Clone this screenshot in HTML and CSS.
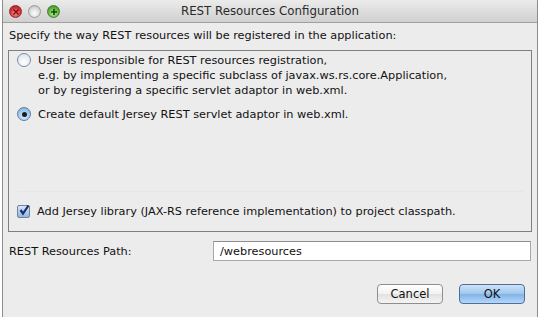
FILE: index.html
```html
<!DOCTYPE html>
<html lang="en">
<head>
    <meta charset="UTF-8">
    <title>REST Resources Configuration</title>
    <link rel="stylesheet" href="styles.css">
</head>
<body>
    <div class="window">
        <div class="title-bar">
            <div class="lights">
                <span class="light close"><svg width="8" height="8" viewBox="0 0 8 8"><path d="M1.5 1.5 L6.5 6.5 M6.5 1.5 L1.5 6.5" stroke="#7a0a0a" stroke-width="1.4"/></svg></span>
                <span class="light mini"></span>
                <span class="light zoom"><svg width="8" height="8" viewBox="0 0 8 8"><path d="M4 1 V7 M1 4 H7" stroke="#0b4a0b" stroke-width="1.6"/></svg></span>
            </div>
            <div class="title">REST Resources Configuration</div>
        </div>

        <div class="content">
            <div class="intro">Specify the way REST resources will be registered in the application:</div>

            <div class="group">
                <div class="option">
                    <span class="radio"></span>
                    <div class="option-text">
                        User is responsible for REST resources registration,<br>
                        e.g. by implementing a specific subclass of javax.ws.rs.core.Application,<br>
                        or by registering a specific servlet adaptor in web.xml.
                    </div>
                </div>
                <div class="option">
                    <span class="radio checked"></span>
                    <div class="option-text">Create default Jersey REST servlet adaptor in web.xml.</div>
                </div>
                <div class="spacer"></div>
                <div class="option check-row">
                    <span class="checkbox">
                        <svg width="12" height="12" viewBox="0 0 12 12"><path d="M2.5 6 L5 9.5 L10.5 1.5" fill="none" stroke="#1c2f6e" stroke-width="2.2"/></svg>
                    </span>
                    <div class="option-text">Add Jersey library (JAX-RS reference implementation) to project classpath.</div>
                </div>
            </div>

            <div class="path-row">
                <label class="path-label">REST Resources Path:</label>
                <div class="path-input">/webresources</div>
            </div>

            <div class="buttons">
                <button class="btn">Cancel</button>
                <button class="btn primary">OK</button>
            </div>
        </div>
    </div>
</body>
</html>
```

FILE: styles.css
```css
body {
    margin: 0;
    background-color: #ffffff;
    font-family: "DejaVu Sans", sans-serif;
    font-size: 11.3px;
    color: #111111;
}

.window {
    width: 536px;
    height: 317px;
    margin-left: 2px;
    border-left: 1px solid #8c8c8c;
    border-right: 1px solid #8c8c8c;
    background-color: #ececec;
    box-sizing: border-box;
    display: flex;
    flex-direction: column;
}

.title-bar {
    height: 22px;
    background: linear-gradient(#ebebeb, #d0d0d0);
    border-bottom: 1px solid #a0a0a0;
    display: flex;
    align-items: center;
    position: relative;
}

.lights {
    position: absolute;
    left: 6px;
    top: 5px;
    display: flex;
    gap: 6px;
}

.light {
    width: 13px;
    height: 13px;
    border-radius: 50%;
    display: flex;
    justify-content: center;
    align-items: center;
    box-sizing: border-box;
}

.light.close {
    background: radial-gradient(circle at 50% 65%, #f9a0a0, #d4353a 55%, #8e1d20);
    border: 1px solid #9a2a2e;
}

.light.mini {
    background: radial-gradient(circle at 50% 65%, #ffffff, #d8d8d8 60%, #a9a9a9);
    border: 1px solid #9c9c9c;
}

.light.zoom {
    background: radial-gradient(circle at 50% 65%, #c6f2a4, #62b43d 55%, #2f7a1f);
    border: 1px solid #3f7f2a;
}

.title {
    flex: 1;
    text-align: center;
    font-size: 11.8px;
    color: #2a2a2a;
}

.content {
    flex: 1;
    display: flex;
    flex-direction: column;
    padding: 5px 5px 0 5px;
}

.intro {
    padding-left: 1px;
    line-height: 16px;
}

.group {
    margin-top: 6px;
    height: 182px;
    border: 1px solid #7f7f7f;
    box-sizing: border-box;
    display: flex;
    flex-direction: column;
    padding: 2px 0 0 8px;
}

.option {
    display: flex;
    align-items: flex-start;
    gap: 7px;
    margin-bottom: 9px;
}

.option-text {
    line-height: 15px;
}

.radio {
    width: 14px;
    height: 14px;
    border-radius: 50%;
    border: 1px solid #7c8ea8;
    background: radial-gradient(circle at 50% 70%, #ffffff, #e4e8ee 70%, #c5ccd8);
    box-sizing: border-box;
    flex-shrink: 0;
    display: flex;
    justify-content: center;
    align-items: center;
}

.radio.checked {
    background: radial-gradient(circle at 50% 70%, #d9ecfb, #9ec6ea 60%, #6a9fd0);
    border-color: #5f7fa6;
}

.radio.checked::after {
    content: "";
    width: 5px;
    height: 5px;
    border-radius: 50%;
    background-color: #1b1b1b;
}

.spacer {
    flex: 1;
    border-bottom: 1px solid #e6e6e6;
    margin-right: 8px;
    margin-bottom: 12px;
}

.check-row {
    margin-bottom: 12px;
}

.checkbox {
    width: 13px;
    height: 13px;
    border: 1px solid #6f82a0;
    border-radius: 2px;
    background: linear-gradient(#d6e6f7, #8fb8e2);
    box-sizing: border-box;
    flex-shrink: 0;
    margin-top: 1px;
    position: relative;
}

.checkbox svg {
    position: absolute;
    left: 0;
    top: -2px;
}

.path-row {
    display: flex;
    align-items: center;
    margin-top: 9px;
}

.path-label {
    width: 204px;
    padding-left: 1px;
}

.path-input {
    flex: 1;
    height: 20px;
    line-height: 20px;
    border: 1px solid #a8a8a8;
    border-top-color: #8e8e8e;
    background-color: #ffffff;
    padding-left: 6px;
    margin-right: 1px;
    box-sizing: border-box;
}

.buttons {
    display: flex;
    justify-content: flex-end;
    gap: 16px;
    margin-top: 23px;
    padding-right: 7px;
}

.btn {
    width: 66px;
    height: 20px;
    font-family: "DejaVu Sans", sans-serif;
    font-size: 11.5px;
    color: #111111;
    border: 1px solid #8e8e8e;
    border-radius: 4px;
    background: linear-gradient(#ffffff, #f1f1f1 50%, #e2e2e2 51%, #f4f4f4);
    padding: 0;
}

.btn.primary {
    border-color: #4e6f9c;
    background: linear-gradient(#cfe3f8, #9ec6ee 50%, #7fb2e8 51%, #b5d8f8);
}
```
